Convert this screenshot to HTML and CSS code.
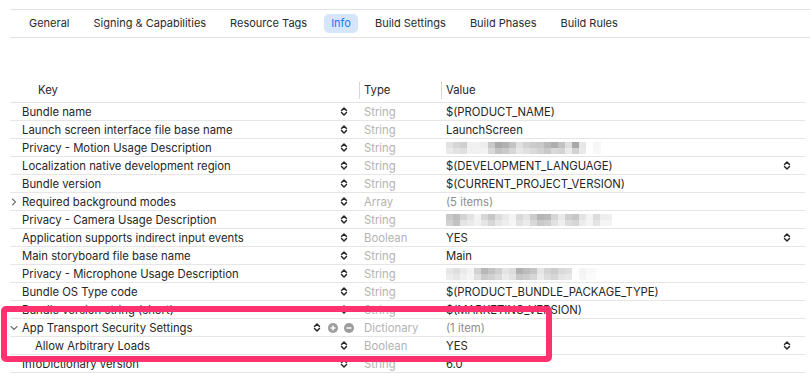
FILE: index.html
```html
<!DOCTYPE html>
<html>
<head>
<meta charset="utf-8">
<link rel="stylesheet" href="styles.css">
</head>
<body>
<div class="page">
  <nav class="tabs">
    <span class="tab">General</span>
    <span class="tab">Signing &amp; Capabilities</span>
    <span class="tab">Resource Tags</span>
    <span class="tab active">Info</span>
    <span class="tab">Build Settings</span>
    <span class="tab">Build Phases</span>
    <span class="tab">Build Rules</span>
  </nav>

  <div class="table">
    <div class="head">
      <div class="hkey">Key</div>
      <div class="htype">Type</div>
      <div class="hval">Value</div>
    </div>

    <div class="row"><div class="key"><span class="disc"></span><span class="name">Bundle name</span><span class="ctrl"><svg class="step" viewBox="0 0 8 11"><path d="M1.5 4.5L4 2L6.5 4.5M1.5 6.5L4 9L6.5 6.5"/></svg></span></div><div class="type">String</div><div class="val">$(PRODUCT_NAME)</div></div>

    <div class="row"><div class="key"><span class="disc"></span><span class="name">Launch screen interface file base name</span><span class="ctrl"><svg class="step" viewBox="0 0 8 11"><path d="M1.5 4.5L4 2L6.5 4.5M1.5 6.5L4 9L6.5 6.5"/></svg></span></div><div class="type">String</div><div class="val">LaunchScreen</div></div>

    <div class="row"><div class="key"><span class="disc"></span><span class="name">Privacy - Motion Usage Description</span><span class="ctrl"><svg class="step" viewBox="0 0 8 11"><path d="M1.5 4.5L4 2L6.5 4.5M1.5 6.5L4 9L6.5 6.5"/></svg></span></div><div class="type">String</div><div class="val"><span class="blur blur1"></span></div></div>

    <div class="row"><div class="key"><span class="disc"></span><span class="name">Localization native development region</span><span class="ctrl"><svg class="step" viewBox="0 0 8 11"><path d="M1.5 4.5L4 2L6.5 4.5M1.5 6.5L4 9L6.5 6.5"/></svg></span></div><div class="type">String</div><div class="val"><span>$(DEVELOPMENT_LANGUAGE)</span><svg class="step" viewBox="0 0 8 11"><path d="M1.5 4.5L4 2L6.5 4.5M1.5 6.5L4 9L6.5 6.5"/></svg></div></div>

    <div class="row"><div class="key"><span class="disc"></span><span class="name">Bundle version</span><span class="ctrl"><svg class="step" viewBox="0 0 8 11"><path d="M1.5 4.5L4 2L6.5 4.5M1.5 6.5L4 9L6.5 6.5"/></svg></span></div><div class="type">String</div><div class="val">$(CURRENT_PROJECT_VERSION)</div></div>

    <div class="row"><div class="key"><span class="disc"><svg class="chev" viewBox="0 0 8 8"><path d="M2.5 1L5.5 4L2.5 7"/></svg></span><span class="name">Required background modes</span><span class="ctrl"><svg class="step" viewBox="0 0 8 11"><path d="M1.5 4.5L4 2L6.5 4.5M1.5 6.5L4 9L6.5 6.5"/></svg></span></div><div class="type">Array</div><div class="val muted">(5 items)</div></div>

    <div class="row"><div class="key"><span class="disc"></span><span class="name">Privacy - Camera Usage Description</span><span class="ctrl"><svg class="step" viewBox="0 0 8 11"><path d="M1.5 4.5L4 2L6.5 4.5M1.5 6.5L4 9L6.5 6.5"/></svg></span></div><div class="type">String</div><div class="val"><span class="blur blur2"></span></div></div>

    <div class="row"><div class="key"><span class="disc"></span><span class="name">Application supports indirect input events</span><span class="ctrl"><svg class="step" viewBox="0 0 8 11"><path d="M1.5 4.5L4 2L6.5 4.5M1.5 6.5L4 9L6.5 6.5"/></svg></span></div><div class="type">Boolean</div><div class="val"><span>YES</span><svg class="step" viewBox="0 0 8 11"><path d="M1.5 4.5L4 2L6.5 4.5M1.5 6.5L4 9L6.5 6.5"/></svg></div></div>

    <div class="row"><div class="key"><span class="disc"></span><span class="name">Main storyboard file base name</span><span class="ctrl"><svg class="step" viewBox="0 0 8 11"><path d="M1.5 4.5L4 2L6.5 4.5M1.5 6.5L4 9L6.5 6.5"/></svg></span></div><div class="type">String</div><div class="val">Main</div></div>

    <div class="row"><div class="key"><span class="disc"></span><span class="name">Privacy - Microphone Usage Description</span><span class="ctrl"><svg class="step" viewBox="0 0 8 11"><path d="M1.5 4.5L4 2L6.5 4.5M1.5 6.5L4 9L6.5 6.5"/></svg></span></div><div class="type">String</div><div class="val"><span class="blur blur3"></span></div></div>

    <div class="row"><div class="key"><span class="disc"></span><span class="name">Bundle OS Type code</span><span class="ctrl"><svg class="step" viewBox="0 0 8 11"><path d="M1.5 4.5L4 2L6.5 4.5M1.5 6.5L4 9L6.5 6.5"/></svg></span></div><div class="type">String</div><div class="val">$(PRODUCT_BUNDLE_PACKAGE_TYPE)</div></div>

    <div class="row"><div class="key"><span class="disc"></span><span class="name">Bundle version string (short)</span><span class="ctrl"><svg class="step" viewBox="0 0 8 11"><path d="M1.5 4.5L4 2L6.5 4.5M1.5 6.5L4 9L6.5 6.5"/></svg></span></div><div class="type">String</div><div class="val">$(MARKETING_VERSION)</div></div>

    <div class="row"><div class="key"><span class="disc"><svg class="chev" viewBox="0 0 8 8"><path d="M1 2.5L4 5.5L7 2.5"/></svg></span><span class="name">App Transport Security Settings</span><span class="ctrl wide"><svg class="step" viewBox="0 0 8 11"><path d="M1.5 4.5L4 2L6.5 4.5M1.5 6.5L4 9L6.5 6.5"/></svg><svg class="circ" viewBox="0 0 10 10"><circle cx="5" cy="5" r="5"/><path d="M2.5 5H7.5M5 2.5V7.5"/></svg><svg class="circ minus" viewBox="0 0 10 10"><circle cx="5" cy="5" r="5"/><path d="M2.5 5H7.5"/></svg></span></div><div class="type">Dictionary</div><div class="val muted">(1 item)</div></div>

    <div class="row"><div class="key child"><span class="disc"></span><span class="name">Allow Arbitrary Loads</span><span class="ctrl"><svg class="step" viewBox="0 0 8 11"><path d="M1.5 4.5L4 2L6.5 4.5M1.5 6.5L4 9L6.5 6.5"/></svg></span></div><div class="type">Boolean</div><div class="val"><span>YES</span><svg class="step" viewBox="0 0 8 11"><path d="M1.5 4.5L4 2L6.5 4.5M1.5 6.5L4 9L6.5 6.5"/></svg></div></div>

    <div class="row"><div class="key"><span class="disc"></span><span class="name">InfoDictionary version</span><span class="ctrl"><svg class="step" viewBox="0 0 8 11"><path d="M1.5 4.5L4 2L6.5 4.5M1.5 6.5L4 9L6.5 6.5"/></svg></span></div><div class="type">String</div><div class="val">6.0</div></div>
  </div>

  <div class="highlight"></div>
</div>
</body>
</html>
```

FILE: styles.css
```css
* { box-sizing: border-box; }
html, body { margin: 0; padding: 0; background: #fff; }
body {
  font-family: Inter, "Noto Sans", "Liberation Sans", sans-serif;
  font-size: 11px;
  color: #262626;
  width: 810px;
  height: 374px;
  overflow: hidden;
}
.page {
  position: relative;
  padding-top: 9px;
}

/* tabs */
.tabs {
  margin-left: 10px;
  height: 29px;
  border-top: 1px solid #e3e3e3;
  border-bottom: 1px solid #e3e3e3;
  display: flex;
  align-items: flex-start;
  gap: 10px;
  padding: 4px 0 0 12px;
}
.tab {
  height: 19px;
  line-height: 19px;
  padding: 0 7px;
  border-radius: 5px;
  color: #2a2a2a;
  white-space: nowrap;
}
.tab.active {
  background: #d5e6fc;
  color: #1f78f0;
}

/* table */
.table {
  margin-left: 10px;
  width: 795px;
  margin-top: 43px;
  font-size: 11.3px;
}
.head {
  display: grid;
  grid-template-columns: 349px 82px 1fr;
  height: 22px;
  border-bottom: 1px solid #e3e3e3;
  align-items: center;
  padding-bottom: 3px;
}
.hkey { padding-left: 28px; }
.htype, .hval {
  border-left: 1px solid #d6d6d6;
  padding-left: 4px;
  height: 17px;
  line-height: 17px;
}
.row {
  display: grid;
  grid-template-columns: 349px 82px 1fr;
  height: 18px;
  border-bottom: 1px solid #e6e6e6;
  align-items: center;
}
.key {
  display: flex;
  align-items: center;
  height: 17px;
  padding-right: 11px;
}
.key.child .name { padding-left: 13px; }
.disc {
  width: 12px;
  flex: none;
  display: flex;
  align-items: center;
  justify-content: flex-start;
}
.name {
  flex: 1;
  white-space: nowrap;
}
.ctrl {
  display: flex;
  align-items: center;
}
.ctrl.wide {
  gap: 6px;
  margin-right: -6px;
}
.ctrl.wide .step { margin-right: 1px; }
.type {
  padding-left: 5px;
  color: #b3b3b3;
}
.val {
  padding-left: 5px;
  padding-right: 14px;
  display: flex;
  align-items: center;
  justify-content: space-between;
  white-space: nowrap;
}
.val.muted { color: #8e8e8e; }

/* icons */
.step {
  width: 8px;
  height: 11px;
  fill: none;
  stroke: #262626;
  stroke-width: 1.45;
  stroke-linecap: round;
  stroke-linejoin: round;
}
.chev {
  width: 8px;
  height: 8px;
  fill: none;
  stroke: #707070;
  stroke-width: 1.1;
  stroke-linecap: round;
  stroke-linejoin: round;
}
.circ {
  width: 10px;
  height: 10px;
}
.circ circle { fill: #9c9c9c; }
.circ path {
  stroke: #fff;
  stroke-width: 1.5;
  fill: none;
}

/* blurred values */
.blur {
  display: block;
  height: 12px;
  background-repeat: no-repeat;
}
.blur1 {
  width: 155px;
  background-image:
    linear-gradient(90deg, #e2e2e2 0 7px, #d6d6d6 7px 14px, #cfcfcf 14px 21px, #f0f0f0 21px 28px, #f0f0f0 28px 35px, #ededed 35px 42px, #c8c8c8 42px 49px, #a9a9a9 49px 56px, #b2b2b2 56px 63px, #c4c4c4 63px 70px, #e0e0e0 70px 77px, #d2d2d2 77px 84px, #cbcbcb 84px 91px, #c9c9c9 91px 98px, #b9b9b9 98px 105px, #aeaeae 105px 112px, #c2c2c2 112px 119px, #dfdfdf 119px 126px, #a8a8a8 126px 133px, #e6e6e6 133px 140px, #fff 140px 147px, #f6f6f6 147px 155px),
    linear-gradient(90deg, #eaeaea 0 7px, #e2e2e2 7px 14px, #dfdfdf 14px 21px, #f2f2f2 21px 28px, #f1f1f1 28px 35px, #f3f3f3 35px 42px, #d8d8d8 42px 49px, #c2c2c2 49px 56px, #c9c9c9 56px 63px, #d6d6d6 63px 70px, #e8e8e8 70px 77px, #e0e0e0 77px 84px, #dadada 84px 91px, #d2d2d2 91px 98px, #c9c9c9 98px 105px, #d8d8d8 105px 112px, #d3d3d3 112px 119px, #eaeaea 119px 126px, #d2d2d2 126px 133px, #eaeaea 133px 140px, #fff 140px 147px, #f8f8f8 147px 155px);
  background-size: 100% 6px, 100% 6px;
  background-position: 0 0, 0 6px;
}
.blur2 {
  width: 166px;
  background-image:
    linear-gradient(90deg, #c9c9c9 0 7px, #bdbdbd 7px 14px, #d4d4d4 14px 21px, #e2e2e2 21px 28px, #f3f3f3 28px 35px, #d6d6d6 35px 42px, #c6c6c6 42px 49px, #dcdcdc 49px 56px, #e9e9e9 56px 63px, #f4f4f4 63px 70px, #d9d9d9 70px 77px, #e4e4e4 77px 84px, #cbcbcb 84px 91px, #b4b4b4 91px 98px, #b9b9b9 98px 105px, #d6d6d6 105px 112px, #eaeaea 112px 119px, #cfcfcf 119px 126px, #c6c6c6 126px 133px, #e3e3e3 133px 140px, #f3f3f3 140px 147px, #dcdcdc 147px 154px, #eeeeee 154px 166px),
    linear-gradient(90deg, #d2d2d2 0 7px, #c3c3c3 7px 14px, #e4e4e4 14px 21px, #eaeaea 21px 28px, #f2f2f2 28px 35px, #e6e6e6 35px 42px, #d7d7d7 42px 49px, #e7e7e7 49px 56px, #eeeeee 56px 63px, #f6f6f6 63px 70px, #e2e2e2 70px 77px, #ebebeb 77px 84px, #d8d8d8 84px 91px, #c9c9c9 91px 98px, #cfcfcf 98px 105px, #e1e1e1 105px 112px, #f0f0f0 112px 119px, #dddddd 119px 126px, #d6d6d6 126px 133px, #ececec 133px 140px, #f4f4f4 140px 147px, #e4e4e4 147px 154px, #f4f4f4 154px 166px);
  background-size: 100% 6px, 100% 6px;
  background-position: 0 0, 0 6px;
}
.blur3 {
  width: 150px;
  background-image:
    linear-gradient(90deg, #e6e6e6 0 7px, #dedede 7px 14px, #eaeaea 14px 21px, #f3f3f3 21px 28px, #d2d2d2 28px 35px, #b7b7b7 35px 42px, #c3c3c3 42px 49px, #cfcfcf 49px 56px, #e4e4e4 56px 63px, #dcdcdc 63px 70px, #b1b1b1 70px 77px, #bcbcbc 77px 84px, #c5c5c5 84px 91px, #e6e6e6 91px 98px, #d3d3d3 98px 105px, #cccccc 105px 112px, #d9d9d9 112px 119px, #dedede 119px 126px, #ffffff 126px 133px, #f4f4f4 133px 140px, #f9f9f9 140px 150px),
    linear-gradient(90deg, #ededed 0 7px, #e7e7e7 7px 14px, #f0f0f0 14px 21px, #f5f5f5 21px 28px, #dfdfdf 28px 35px, #cbcbcb 35px 42px, #d1d1d1 42px 49px, #dadada 49px 56px, #ebebeb 56px 63px, #e3e3e3 63px 70px, #c8c8c8 70px 77px, #cdcdcd 77px 84px, #d6d6d6 84px 91px, #ececec 91px 98px, #dcdcdc 98px 105px, #d6d6d6 105px 112px, #e4e4e4 112px 119px, #e8e8e8 119px 126px, #ffffff 126px 133px, #f6f6f6 133px 140px, #fbfbfb 140px 150px);
  background-size: 100% 6px, 100% 6px;
  background-position: 0 0, 0 6px;
}

/* annotation overlay */
.highlight {
  position: absolute;
  left: 1px;
  top: 306px;
  width: 551px;
  height: 56px;
  border: 6px solid #ff316f;
  border-radius: 5px;
  pointer-events: none;
}
```
